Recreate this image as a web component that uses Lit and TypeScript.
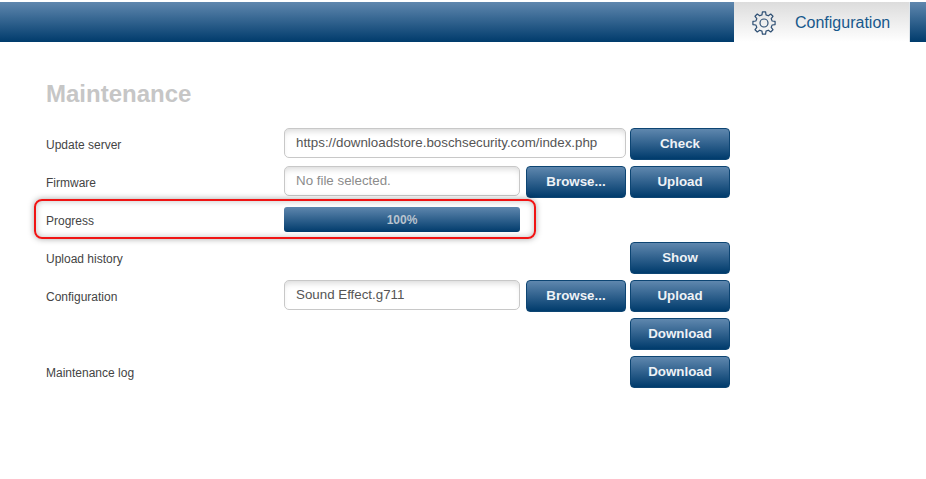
import { LitElement, html, css, svg } from "lit";
import { customElement } from "lit/decorators.js";

function gearPath(): string {
  const n = 8;
  const c = 12;
  const ro = 11.2;
  const ri = 8.4;
  const pts: string[] = [];
  for (let i = 0; i < n; i++) {
    const a = (i * 2 * Math.PI) / n - Math.PI / 2;
    const w = Math.PI / n;
    const list: [number, number][] = [
      [ri, a - w * 0.62],
      [ro, a - w * 0.36],
      [ro, a + w * 0.36],
      [ri, a + w * 0.62],
    ];
    for (const [r, t] of list) {
      pts.push(`${(c + r * Math.cos(t)).toFixed(2)} ${(c + r * Math.sin(t)).toFixed(2)}`);
    }
  }
  return "M" + pts.join("L") + "Z";
}

@customElement("app-root")
export class AppRoot extends LitElement {
  static styles = css`
    :host { display: block; width: 926px; height: 479px; background: #fff; font-family: "Liberation Sans", Arial, sans-serif; position: relative; overflow: hidden; }
    .header { margin-top: 2px; height: 40px; background: linear-gradient(#5f87ae, #003b6c); display: flex; justify-content: flex-end; padding-right: 16px; box-sizing: border-box; }
    .tab { width: 176px; height: 40px; box-sizing: border-box; background: linear-gradient(#dcdcdc, #ffffff); display: flex; align-items: center; padding: 1px 0 0 18px; gap: 19px; color: #17588c; font-size: 16px; border-right: 1px solid #dfe5ea; }
    .tab svg { width: 24px; height: 24px; flex: none; }
    .main { padding: 38px 0 0 46px; }
    h1 { margin: 0 0 21px; font-size: 24px; line-height: 27px; font-weight: bold; color: #c6c6c6; }
    .grid { display: grid; grid-template-columns: 238px 242px 104px 100px; grid-auto-rows: 32px; row-gap: 6px; align-items: center; }
    .label { grid-column: 1; font-size: 12px; color: #444; padding-top: 1px; }
    .input { box-sizing: border-box; height: 30px; align-self: start; border: 1px solid #c8c8c8; border-radius: 5px; background: #fff; box-shadow: inset 0 5px 6px -3px #d8d8d8; font-size: 13.33px; color: #555; display: flex; align-items: center; padding: 0 0 1px 11px; }
    .input.wide { grid-column: 2 / span 2; width: 342px; }
    .input.narrow { grid-column: 2; width: 236px; }
    .muted { color: #8c8c8c; }
    .btn { box-sizing: border-box; width: 100px; height: 32px; border-radius: 4px; background: linear-gradient(#5f87ae, #003b6c); color: #eef2f6; font-size: 13.33px; font-weight: bold; display: flex; align-items: center; justify-content: center; padding-bottom: 2px; border: 1px solid #0d4573; }
    .b1 { grid-column: 3; }
    .b2 { grid-column: 4; }
    .bar { grid-column: 2; width: 236px; height: 25px; align-self: start; margin-top: 3px; box-sizing: border-box; border-radius: 3px; background: linear-gradient(#5f87ae, #003b6c); color: #b9c4cf; font-size: 12px; font-weight: bold; display: flex; align-items: center; justify-content: center; }
    .highlight { position: absolute; left: 34px; top: 199px; width: 502px; height: 40px; box-sizing: border-box; border: 2px solid #f01414; border-radius: 8px; box-shadow: 0 0 6px rgba(0,0,0,.35), inset 0 0 6px rgba(0,0,0,.25); }
  `;

  render() {
    return html`
      <div class="header">
        <div class="tab">
          <svg viewBox="0 0 24 24" fill="none" stroke="#2f5074" stroke-width="1.2" stroke-linejoin="round">
            ${svg`<circle cx="12" cy="12" r="4"></circle><path d=${gearPath()}></path>`}
          </svg>
          <span>Configuration</span>
        </div>
      </div>
      <div class="main">
        <h1>Maintenance</h1>
        <div class="grid">
          <div class="label">Update server</div>
          <div class="input wide">https://downloadstore.boschsecurity.com/index.php</div>
          <div class="btn b2">Check</div>

          <div class="label">Firmware</div>
          <div class="input narrow muted">No file selected.</div>
          <div class="btn b1">Browse...</div>
          <div class="btn b2">Upload</div>

          <div class="label">Progress</div>
          <div class="bar">100%</div>

          <div class="label">Upload history</div>
          <div class="btn b2">Show</div>

          <div class="label">Configuration</div>
          <div class="input narrow">Sound Effect.g711</div>
          <div class="btn b1">Browse...</div>
          <div class="btn b2">Upload</div>

          <div class="btn b2">Download</div>

          <div class="label">Maintenance log</div>
          <div class="btn b2">Download</div>
        </div>
      </div>
      <div class="highlight"></div>
    `;
  }
}
